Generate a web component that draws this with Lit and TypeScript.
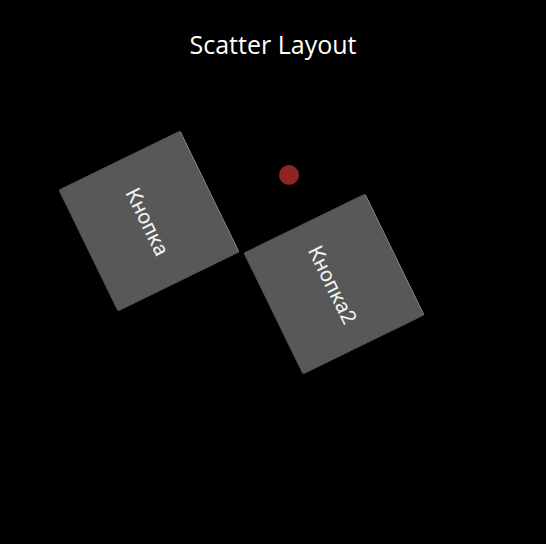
import { LitElement, html, css } from "lit";
import { customElement, property } from "lit/decorators.js";

@customElement("scatter-button")
class ScatterButton extends LitElement {
  @property() label = "";

  static styles = css`
    :host {
      display: block;
      width: 136px;
      height: 136px;
      transform: rotate(64deg);
    }
    .tile {
      box-sizing: border-box;
      display: block;
      width: 100%;
      height: 100%;
      margin: 0;
      padding: 4px 0 0;
      border: 1px solid #484848;
      border-top-color: #8c8c8c;
      border-radius: 3px;
      background: #585858;
      color: #f0f0f0;
      font: 400 21px/24px Roboto, sans-serif;
      text-align: center;
      cursor: pointer;
    }
    .tile:active {
      background: #32a4ce;
    }
  `;

  render() {
    return html`<button class="tile">${this.label}</button>`;
  }
}

@customElement("app-root")
class AppRoot extends LitElement {
  static styles = css`
    :host {
      display: block;
      position: relative;
      min-height: 100vh;
      overflow: hidden;
      background: #000;
    }
    .title {
      margin: 0;
      padding-top: 28px;
      color: #fff;
      font: 400 25px/32px "Open Sans", "Noto Sans", sans-serif;
      text-align: center;
    }
    .item {
      position: absolute;
    }
    .first {
      left: 81px;
      top: 153px;
    }
    .second {
      left: 266px;
      top: 216px;
    }
    .touch {
      left: 279px;
      top: 165px;
      width: 20px;
      height: 20px;
      border-radius: 50%;
      background: #902424;
    }
  `;

  render() {
    return html`
      <h1 class="title">Scatter Layout</h1>
      <scatter-button class="item first" label="Кнопка"></scatter-button>
      <scatter-button class="item second" label="Кнопка2"></scatter-button>
      <div class="item touch"></div>
    `;
  }
}
